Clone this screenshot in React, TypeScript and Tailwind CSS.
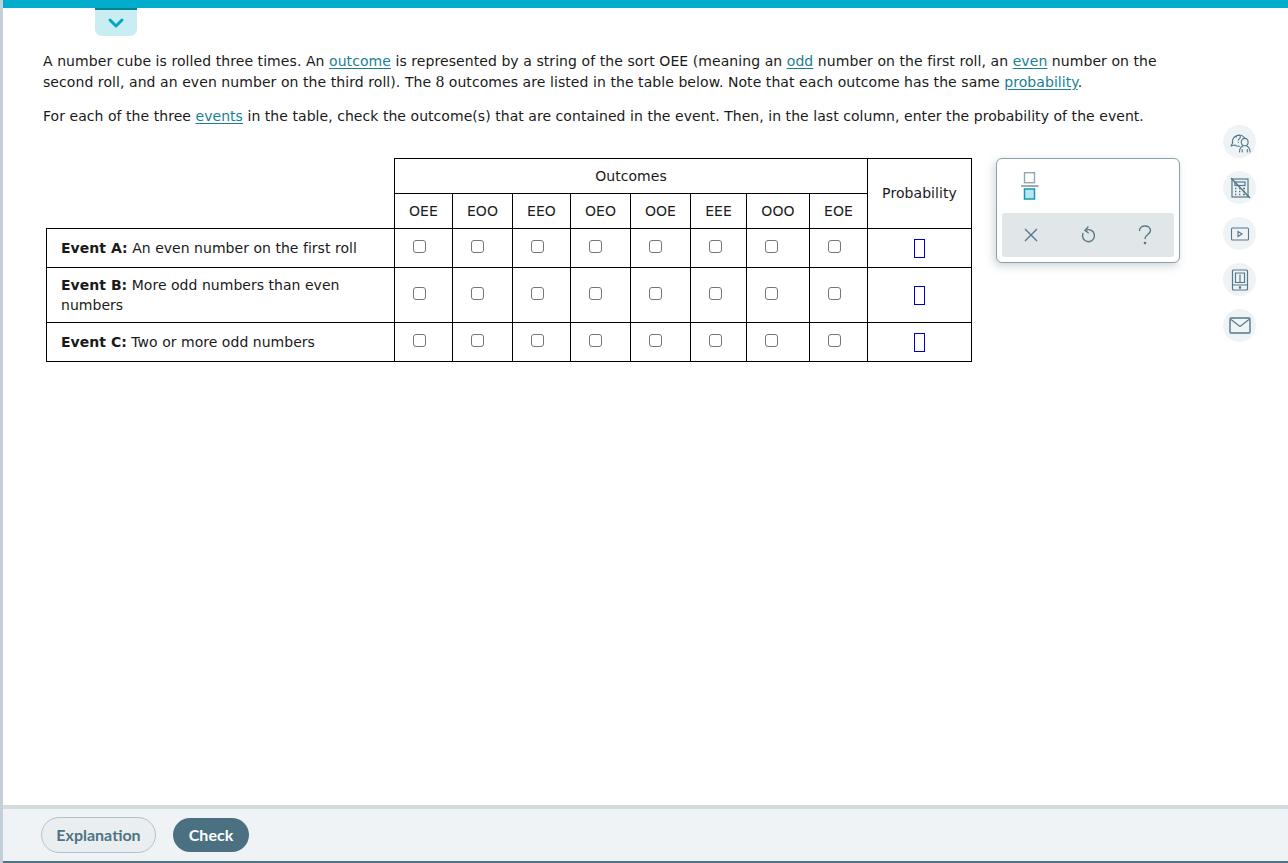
import React from "react";

const font = "font-['DejaVu_Sans','Liberation_Sans',sans-serif]";

function A({ children }: { children: React.ReactNode }) {
  return <a className="text-[#1a7f93] underline underline-offset-2">{children}</a>;
}

const cols = ["OEE", "EOO", "EEO", "OEO", "OOE", "EEE", "OOO", "EOE"];
const widths = [58, 60, 58, 60, 60, 56, 63, 58];
const rows: { h: string; b: string; t: string }[] = [
  { h: "h-[39px]", b: "Event A:", t: "An even number on the first roll" },
  { h: "h-[55px]", b: "Event B:", t: "More odd numbers than even numbers" },
  { h: "h-[39px]", b: "Event C:", t: "Two or more odd numbers" },
];

const stroke = "#527889";

function Round({ children }: { children: React.ReactNode }) {
  return <div className="flex h-[33px] w-[33px] items-center justify-center rounded-full bg-[#eff3f5]">{children}</div>;
}

export default function App() {
  return (
    <div className={`${font} relative flex h-[863px] w-[1288px] flex-col overflow-hidden border-l-[3px] border-[#c3d0d9] bg-white text-[14px] tracking-[0.07px] text-[#1a1a1a]`}>
      <div className="h-2 shrink-0 bg-[#00adcc]" />
      <div className="absolute left-[92px] top-2 flex h-[28px] w-[42px] items-center justify-center rounded-b-[7px] border-t-2 border-[#0b7f95] bg-[#c9edf3]">
        <svg width="18" height="12" viewBox="0 0 18 12" fill="none" stroke="#00a8c6" strokeWidth="3" strokeLinecap="round" strokeLinejoin="round">
          <path d="M3 3l6 6 6-6" />
        </svg>
      </div>

      <div className="flex min-h-0 flex-1">
        <div className="w-[1194px] pl-10 pt-[43px]">
          <p className="w-[1125px] leading-[21px]">
            A number cube is rolled three times. An <A>outcome</A> is represented by a string of the sort OEE (meaning an <A>odd</A> number on the first roll, an <A>even</A> number on the second roll, and an even number on the third roll). The <span className="font-['Liberation_Serif',serif] text-[17px] leading-[14px]">8</span> outcomes are listed in the table below. Note that each outcome has the same <A>probability</A>.
          </p>
          <p className="mt-[13px] leading-[21px] tracking-[0.05px]">
            For each of the three <A>events</A> in the table, check the outcome(s) that are contained in the event. Then, in the last column, enter the probability of the event.
          </p>

          <div className="mt-[31px] flex items-start pl-[3px]">
            <table className="w-[926px] table-fixed border-collapse text-[#1a1a1a]">
              <colgroup>
                <col className="w-[348px]" />
                {widths.map((w, i) => (
                  <col key={i} style={{ width: w }} />
                ))}
                <col className="w-[104px]" />
              </colgroup>
              <thead>
                <tr className="h-[35px]">
                  <th />
                  <th colSpan={8} className="border border-black text-center font-normal">Outcomes</th>
                  <th rowSpan={2} className="border border-black text-center font-normal">Probability</th>
                </tr>
                <tr className="h-[35px]">
                  <th />
                  {cols.map((c) => (
                    <th key={c} className="border border-black text-center font-normal">{c}</th>
                  ))}
                </tr>
              </thead>
              <tbody>
                {rows.map((r) => (
                  <tr key={r.b} className={r.h}>
                    <td className="border border-black py-0 pl-[14px] pr-[20px] leading-[20px] tracking-[0.03px]">
                      <b className="font-bold">{r.b}</b> {r.t}
                    </td>
                    {cols.map((c) => (
                      <td key={c} className="border border-black">
                        <div className="-mt-[3px] ml-[18px] h-[13px] w-[13px] rounded-[3px] border border-[#767676] bg-white" />
                      </td>
                    ))}
                    <td className="border border-black">
                      <div className="mx-auto h-[19px] w-[11px] border border-[#0000c0]" />
                    </td>
                  </tr>
                ))}
              </tbody>
            </table>

            <div className="ml-[24px] h-[105px] w-[184px] shrink-0 rounded-[6px] border border-[#8aa0aa] bg-white shadow-[-2px_3px_8px_rgba(60,90,100,0.25)]">
              <div className="flex h-[54px] items-start pl-[24px] pt-[13px]">
                <svg width="18" height="28" viewBox="0 0 18 28" fill="none">
                  <rect x="3.5" y="0.7" width="10" height="10" fill="#fff" stroke="#98a5ac" strokeWidth="1.4" />
                  <path d="M0 14h17.5" stroke="#6d8a98" strokeWidth="1.4" />
                  <rect x="3.5" y="17" width="10" height="10" fill="#b9e6f0" stroke="#0f9bb4" strokeWidth="1.5" />
                </svg>
              </div>
              <div className="mx-[5px] grid h-[44px] grid-cols-3 place-items-center rounded-[3px] bg-[#e1e6e9]">
                <svg width="16" height="16" viewBox="0 0 16 16" fill="none" stroke={stroke} strokeWidth="1.4">
                  <path d="M2 2l12 12M14 2L2 14" />
                </svg>
                <svg width="16" height="18" viewBox="0 0 16 18" fill="none" stroke={stroke} strokeWidth="1.4" strokeLinecap="round">
                  <path d="M5.5 4.5a6 6 0 1 1-2.6 3" />
                  <path d="M8 1L5 4.3 8.2 6.8" />
                </svg>
                <svg width="14" height="20" viewBox="0 0 14 20" fill="none" stroke={stroke} strokeWidth="1.4" strokeLinecap="round">
                  <path d="M1.5 5.5C1.5 3 3.8 1 7 1s5.5 2 5.5 4.6c0 3.8-5.5 4-5.5 8" />
                  <circle cx="7" cy="18" r="0.6" fill={stroke} />
                </svg>
              </div>
            </div>
          </div>
        </div>

        <div className="flex flex-col gap-[13px] pl-[26px] pt-[117px]">
          <Round>
            <svg width="22" height="22" viewBox="0 0 22 22" fill="none" stroke={stroke} strokeWidth="1.1" strokeLinecap="round" strokeLinejoin="round">
              <path d="M15.4 6.6A6.7 6.7 0 0 0 3.6 12l-1.6 3 3.6-1a6.7 6.7 0 0 0 5 1.2" />
              <path d="M7.2 6.3c0-1.3 1-2 2.1-2s2.1.8 2.1 1.8c0 1.4-2.1 1.6-2.1 3.1" />
              <path d="M9.3 11.2v.3" />
              <path d="M15.7 7.4a3.4 3.4 0 0 1 3.4 3.5c0 2.1-1.5 3.8-3.4 3.8s-3.4-1.7-3.4-3.8a3.4 3.4 0 0 1 3.4-3.5z" />
              <path d="M10.5 21c0-3 1.2-5 3.3-6M21 21c0-3-1.2-5-3.3-6M13.2 21v-2.5M18.3 21v-2.5" />
            </svg>
          </Round>
          <Round>
            <svg width="22" height="22" viewBox="0 0 22 22" fill="none" stroke={stroke} strokeWidth="1.2">
              <rect x="3" y="2" width="16" height="18" />
              <rect x="6" y="5" width="10" height="3.5" />
              <path d="M6 11.5h1.4M10 11.5h1.4M14 11.5h2M6 14.5h1.4M10 14.5h1.4M14 14.5h2M6 17.5h1.4M10 17.5h1.4M14 17.5h2" strokeWidth="1.4" />
              <path d="M2 1l19 20" strokeWidth="1.5" />
            </svg>
          </Round>
          <Round>
            <svg width="20" height="16" viewBox="0 0 20 16" fill="none" stroke={stroke} strokeWidth="1.1">
              <rect x="1.5" y="2" width="17" height="12" rx="1" />
              <path d="M8 5.5l4 2.5-4 2.5z" />
            </svg>
          </Round>
          <Round>
            <svg width="18" height="22" viewBox="0 0 18 22" fill="none" stroke={stroke} strokeWidth="1.2">
              <rect x="1.5" y="1" width="15" height="20" rx="1" />
              <path d="M1.5 16h15M4.5 4h9v9.5h-9zM9 5.5v8" />
              <circle cx="9" cy="18.5" r="0.7" fill={stroke} />
            </svg>
          </Round>
          <Round>
            <svg width="22" height="17" viewBox="0 0 22 17" fill="none" stroke={stroke} strokeWidth="1.4" strokeLinejoin="round">
              <rect x="1" y="1" width="20" height="15" rx="1" />
              <path d="M2 2.5l9 7 9-7" strokeWidth="1.1" />
            </svg>
          </Round>
        </div>
      </div>

      <div className="flex h-[58px] shrink-0 items-center gap-[17px] border-t-[4px] border-b-2 border-t-[#d5dce0] border-b-[#4e7484] bg-[#eff3f5] pl-[38px] font-['Lato','Liberation_Sans',sans-serif] text-[16px] font-bold tracking-normal">
        <button className="flex h-[36px] w-[115px] items-center justify-center rounded-full border border-[#b4c2ca] bg-[#e9eef1] text-[#4e7484]">Explanation</button>
        <button className="flex h-[34px] w-[76px] items-center justify-center rounded-full bg-[#4a7082] text-white">Check</button>
      </div>
    </div>
  );
}
